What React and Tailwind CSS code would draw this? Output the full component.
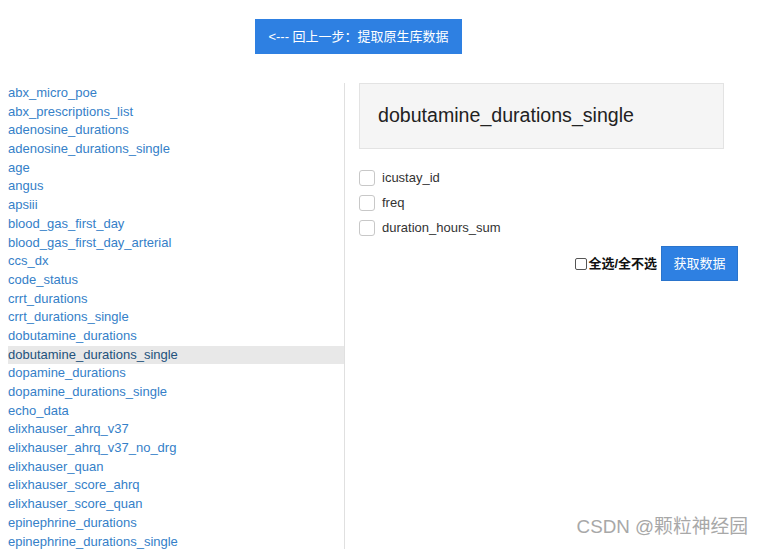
import { useState } from 'react';

const tables = [
    'abx_micro_poe',
    'abx_prescriptions_list',
    'adenosine_durations',
    'adenosine_durations_single',
    'age',
    'angus',
    'apsiii',
    'blood_gas_first_day',
    'blood_gas_first_day_arterial',
    'ccs_dx',
    'code_status',
    'crrt_durations',
    'crrt_durations_single',
    'dobutamine_durations',
    'dobutamine_durations_single',
    'dopamine_durations',
    'dopamine_durations_single',
    'echo_data',
    'elixhauser_ahrq_v37',
    'elixhauser_ahrq_v37_no_drg',
    'elixhauser_quan',
    'elixhauser_score_ahrq',
    'elixhauser_score_quan',
    'epinephrine_durations',
    'epinephrine_durations_single',
];

const columns = ['icustay_id', 'freq', 'duration_hours_sum'];

const App = () => {
    const [active] = useState('dobutamine_durations_single');

    return (
        <div
            className="relative w-[762px] h-[549px] overflow-hidden bg-white text-[13px] text-[#333]"
            style={{ fontFamily: '"Liberation Sans", "Noto Sans CJK SC", sans-serif' }}
        >
            {/* Back button */}
            <div className="pt-[19px] pl-[255px]">
                <button className="h-[35px] w-[207px] bg-[#2e80e2] text-white text-[13px] leading-[35px] text-center">
                    &lt;--- 回上一步：提取原生库数据
                </button>
            </div>

            <div className="flex mt-[29px]">
                {/* Table list */}
                <div className="w-[345px] shrink-0 pl-[8px] pt-[1px] border-r border-[#e0e0e0] h-[470px]">
                    {tables.map((t) => (
                        <div
                            key={t}
                            className={`h-[18.7px] leading-[18.7px] whitespace-nowrap ${
                                t === active ? 'bg-[#e8e8e8] text-[#23527c]' : 'text-[#3580c8]'
                            }`}
                        >
                            {t}
                        </div>
                    ))}
                </div>

                {/* Column picker */}
                <div className="pl-[14px] flex-1">
                    <div className="w-[365px] h-[66px] bg-[#f5f5f5] border border-[#e3e3e3] flex items-center pl-[18px]">
                        <h2 className="text-[19.6px] text-[#222]">{active}</h2>
                    </div>

                    <div className="mt-[21px] flex flex-col gap-[9px]">
                        {columns.map((c) => (
                            <label key={c} className="flex items-center h-[16px]">
                                <span className="w-[16px] h-[16px] rounded-[3px] border border-[#c8c8c8] bg-white" />
                                <span className="ml-[7px] text-[#333]">{c}</span>
                            </label>
                        ))}
                    </div>

                    <div className="mt-[10px] flex items-center justify-end w-[379px]">
                        <label className="flex items-center font-bold text-[13px] text-[#111]">
                            <span className="w-[12px] h-[12px] border border-[#555] rounded-[2px] bg-white mr-[1px]" />
                            全选/全不选
                        </label>
                        <button className="ml-[4px] w-[77px] h-[35px] bg-[#2e80e2] text-white text-[13px] border border-[#2a74cc]">
                            获取数据
                        </button>
                    </div>
                </div>
            </div>

            {/* Watermark */}
            <div className="absolute right-[14px] bottom-[8px] text-[18.8px] text-[#a8a8a8]">
                CSDN @颗粒神经园
            </div>
        </div>
    );
};

export default App;
